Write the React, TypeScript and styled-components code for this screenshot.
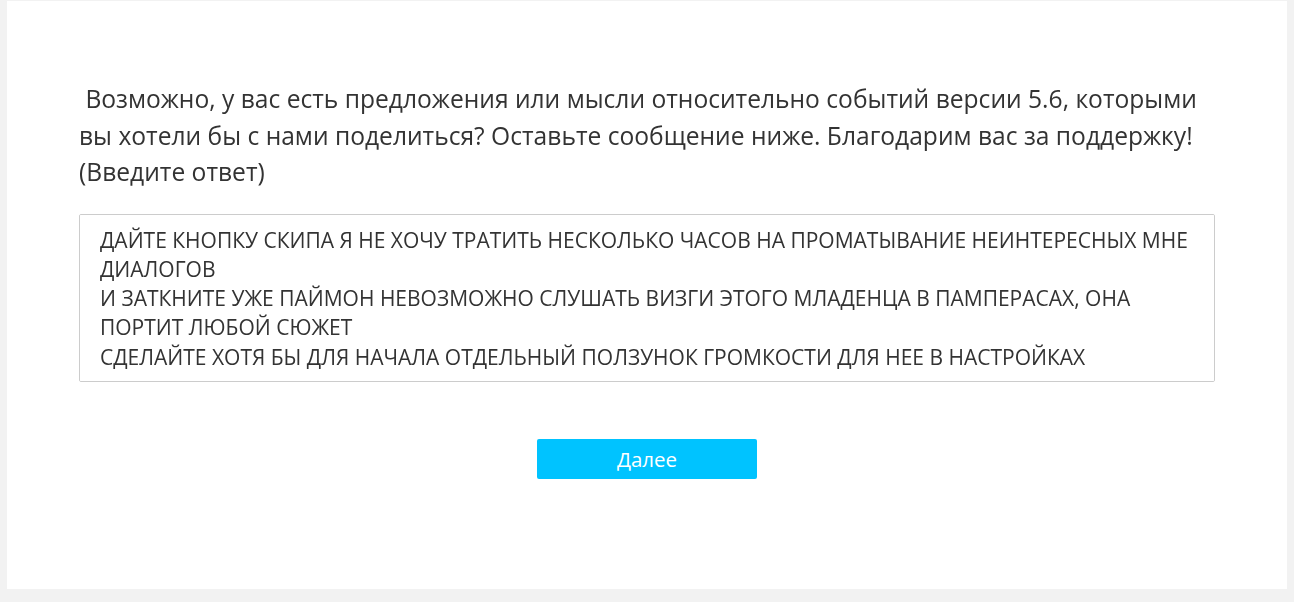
import styled, { createGlobalStyle } from 'styled-components';

const GlobalStyle = createGlobalStyle`
  html, body {
    margin: 0;
    padding: 0;
    background: #f2f2f2;
  }
  body {
    font-family: 'Open Sans', 'Noto Sans', sans-serif;
    color: #333;
  }
`;

const Page = styled.div`
  padding: 1px 7px 13px;
`;

const Panel = styled.div`
  background: #fff;
  height: 588px;
  box-sizing: border-box;
  padding: 80px 72px 0 72px;
`;

const Question = styled.div`
  font-size: 24.6px;
  line-height: 36.5px;
  color: #333;
  white-space: pre-wrap;
  margin-bottom: 23px;
`;

const AnswerBox = styled.textarea`
  display: block;
  width: 100%;
  height: 168px;
  box-sizing: border-box;
  padding: 11px 20px;
  border: 1px solid #ccc;
  border-radius: 2px;
  font-family: inherit;
  font-size: 21px;
  line-height: 29.3px;
  color: #333;
  resize: none;
  outline: none;
`;

const Actions = styled.div`
  display: flex;
  justify-content: center;
  margin-top: 57px;
`;

const NextButton = styled.button`
  width: 220px;
  height: 40px;
  border: none;
  border-radius: 2px;
  background: #00c3ff;
  color: #fff;
  font-family: inherit;
  font-size: 20.5px;
  cursor: pointer;
`;

const ANSWER = `ДАЙТЕ КНОПКУ СКИПА Я НЕ ХОЧУ ТРАТИТЬ НЕСКОЛЬКО ЧАСОВ НА ПРОМАТЫВАНИЕ НЕИНТЕРЕСНЫХ МНЕ ДИАЛОГОВ
И ЗАТКНИТЕ УЖЕ ПАЙМОН НЕВОЗМОЖНО СЛУШАТЬ ВИЗГИ ЭТОГО МЛАДЕНЦА В ПАМПЕРАСАХ, ОНА ПОРТИТ ЛЮБОЙ СЮЖЕТ
СДЕЛАЙТЕ ХОТЯ БЫ ДЛЯ НАЧАЛА ОТДЕЛЬНЫЙ ПОЛЗУНОК ГРОМКОСТИ ДЛЯ НЕЕ В НАСТРОЙКАХ`;

export default function App() {
  return (
    <>
      <GlobalStyle />
      <Page>
        <Panel>
          <Question>
            {' Возможно, у вас есть предложения или мысли относительно событий версии 5.6, которыми вы хотели бы с нами поделиться? Оставьте сообщение ниже. Благодарим вас за поддержку!'}
            <br />
            (Введите ответ)
          </Question>
          <AnswerBox defaultValue={ANSWER} />
          <Actions>
            <NextButton>Далее</NextButton>
          </Actions>
        </Panel>
      </Page>
    </>
  );
}
